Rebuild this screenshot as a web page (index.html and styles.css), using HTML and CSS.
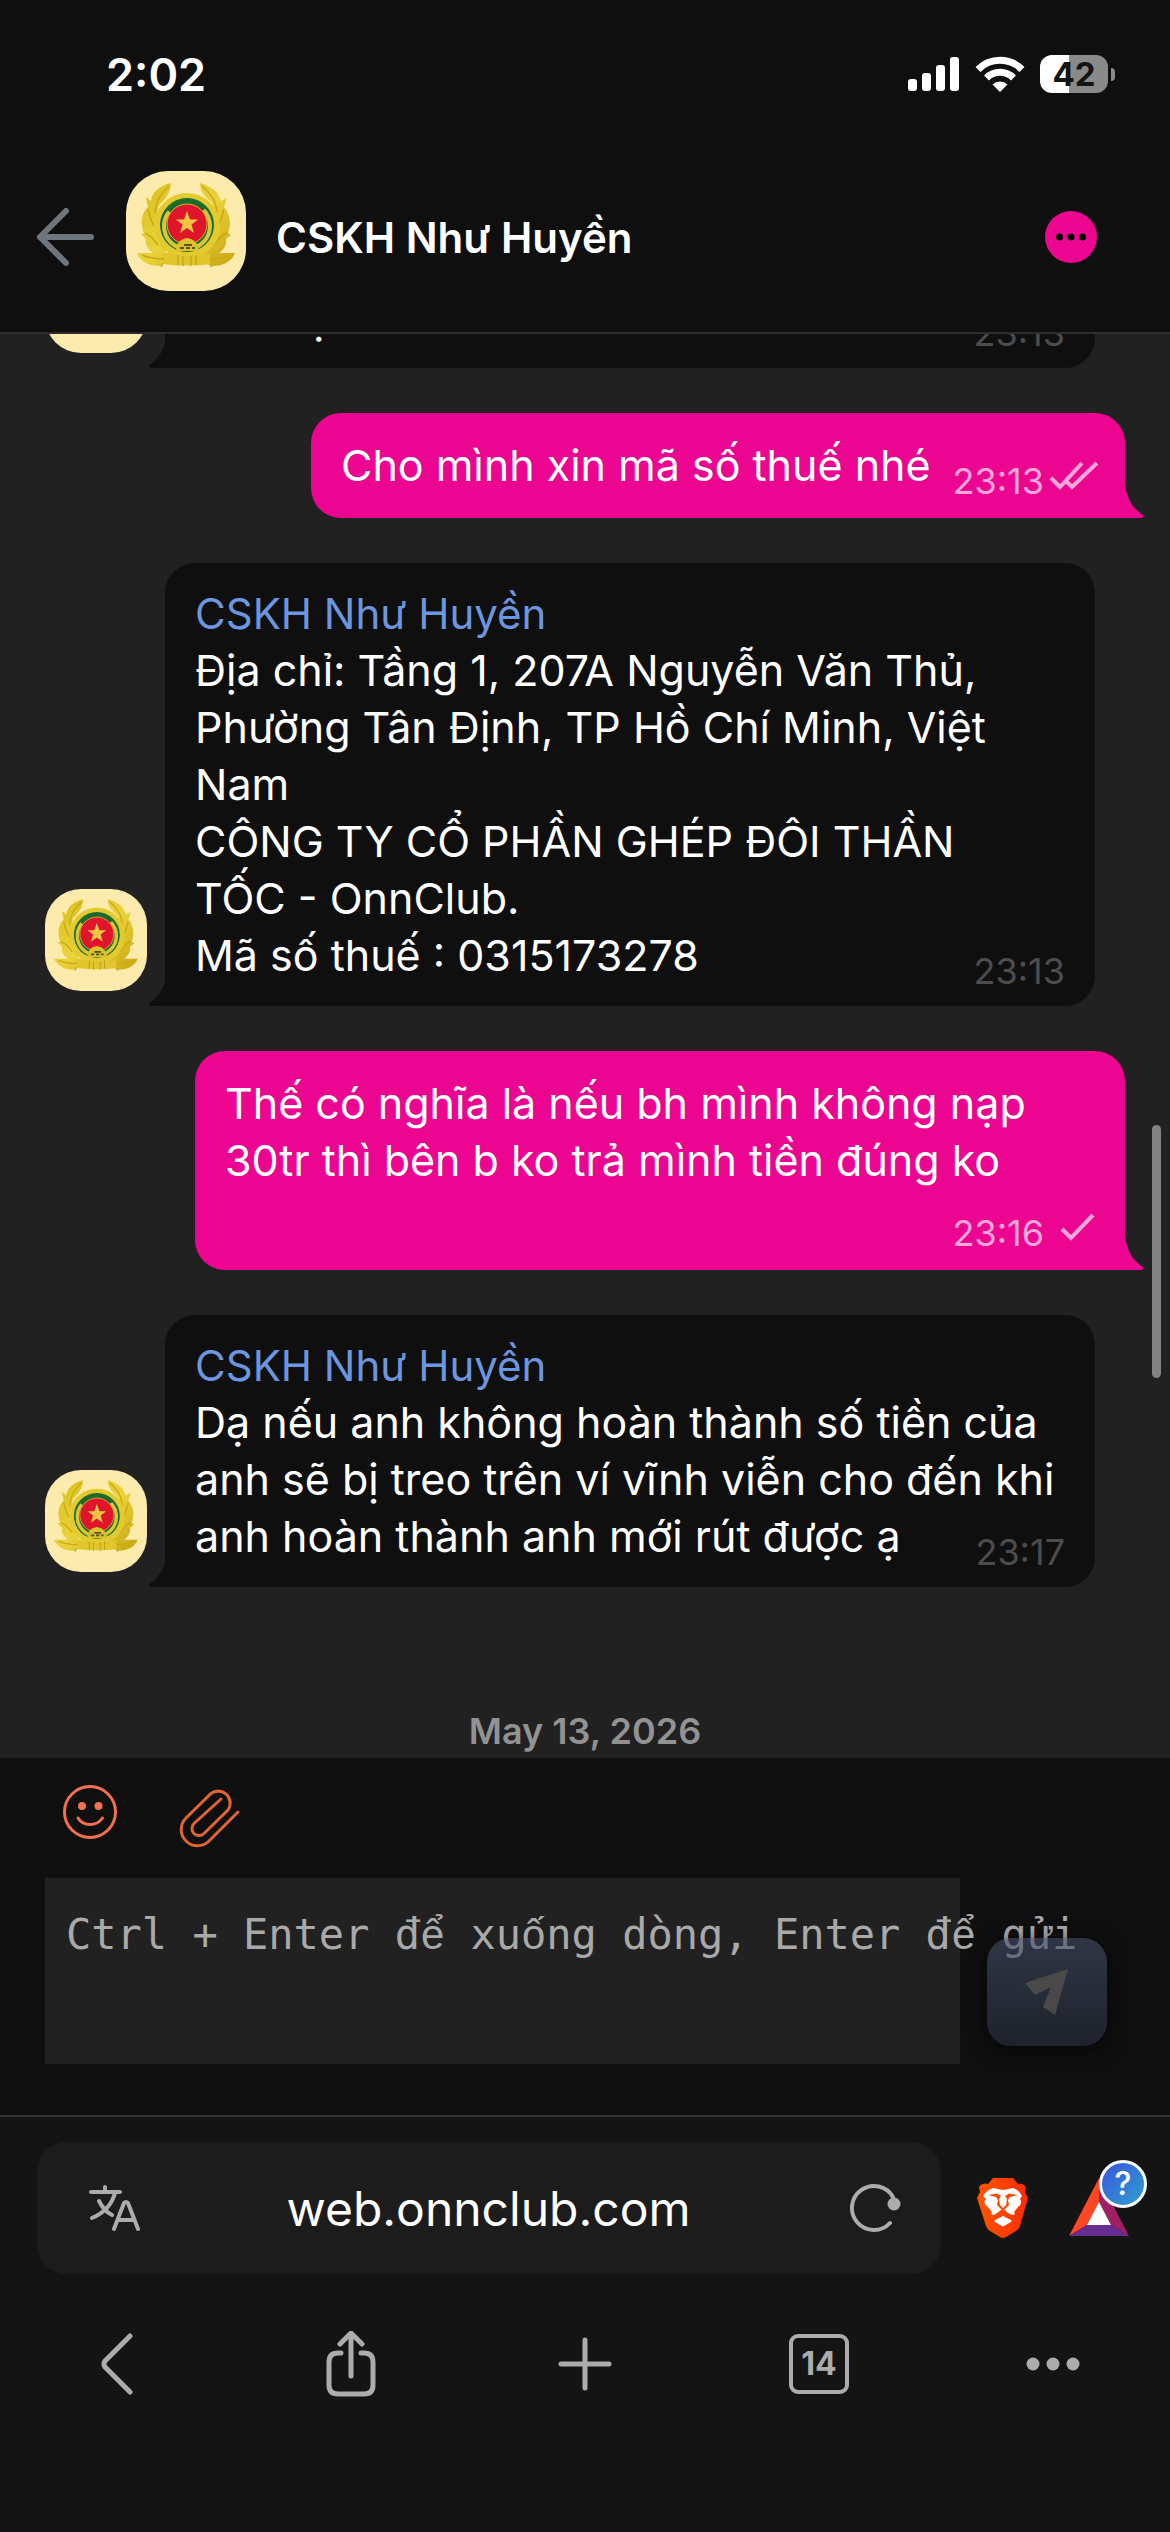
FILE: index.html
```html
<!DOCTYPE html>
<html lang="vi">
<head>
    <meta charset="UTF-8">
    <meta name="viewport" content="width=device-width, initial-scale=1.0">
    <title>CSKH Như Huyền</title>
    <link rel="stylesheet" href="styles.css">
</head>
<body>
    <svg class="defs" aria-hidden="true">
        <defs>
            <linearGradient id="gold" x1="0" y1="0" x2="1" y2="1">
                <stop offset="0" stop-color="#d9bf1c"/>
                <stop offset="0.5" stop-color="#e9d23a"/>
                <stop offset="1" stop-color="#c9a512"/>
            </linearGradient>
            <linearGradient id="braveGrad" x1="0" y1="0" x2="1" y2="0">
                <stop offset="0" stop-color="#ff5500"/>
                <stop offset="1" stop-color="#ff2d00"/>
            </linearGradient>
            <symbol id="emblem" viewBox="0 0 120 120">
                <rect width="120" height="120" fill="#fdebae"/>
                <path d="M45 12C32 15 26 22 25 30L20 26L22 36C14 44 15 54 18 62L15 63L20 68C19 74 22 78 27 82L11 82C14 90 22 95 34 95L40 92H80L86 95C98 95 106 90 109 82L93 82C98 78 101 74 100 68L105 64L102 62C105 54 105 44 98 36L101 27L95 30C93 22 87 16 74 12C74 22 80 26 86 32L92 55L80 82H40L28 55L33 34C40 28 44 22 45 12Z" fill="url(#gold)"/>
                <path d="M43 15C34 24 30 30 29 42M22 38C24 46 25 52 30 58M19 62C24 64 28 68 32 74M76 15C86 24 90 30 91 42M98 38C96 46 95 52 90 58M101 62C96 64 92 68 88 74M16 84C30 90 42 88 52 84M104 84C90 90 78 88 68 84M35 96L37 92M86 96L83 92" fill="none" stroke="#c9a915" stroke-width="1.5"/>
                <circle cx="61" cy="55" r="33" fill="#e3cb2f"/>
                <circle cx="61" cy="54" r="27" fill="#1c6a2c"/>
                <circle cx="61" cy="55" r="23" fill="none" stroke="#d8c63a" stroke-width="4" stroke-dasharray="106 38.500" stroke-dashoffset="-126"/>
                <circle cx="61" cy="53" r="20" fill="#e0152b" stroke="#d8b92a" stroke-width="1"/>
                <path d="M61 40L64 48.500L72 48.500L65.500 53.500L68 62L61 57L54 62L56.500 53.500L50 48.500L58 48.500Z" fill="#f0c544"/>
                <path d="M50 80C50 71 55 68 61 67C67 68 72 71 73 80Z" fill="#dcc22c"/>
                <path d="M54 77H58M60 77H64M66 77H69M58 74H66" stroke="#5a5210" stroke-width="2"/>
                <path d="M38 82C50 86 72 86 84 82V93C72 95 50 95 38 93Z" fill="#e0c62a"/>
                <path d="M52 84V94M57 85V95M65 85V95M70 84V94" stroke="#bb9a14" stroke-width="1"/>
            </symbol>
            <symbol id="tail" viewBox="0 0 20 36">
                <path d="M20 0C19 16 12 27 2 33Q1 36 4 36H20Z" fill="currentColor"/>
            </symbol>
        </defs>
    </svg>

    <div class="status-bar">
        <span class="clock">2:02</span>
        <div class="status-icons">
            <svg width="52" height="34" viewBox="0 0 52 34" fill="#fff">
                <rect x="0" y="22" width="9" height="12" rx="3"/>
                <rect x="14" y="16" width="9" height="18" rx="3"/>
                <rect x="28" y="8" width="9" height="26" rx="3"/>
                <rect x="42" y="0" width="9" height="34" rx="3"/>
            </svg>
            <svg width="50" height="36" viewBox="0 0 50 36" fill="none" stroke="#fff" stroke-width="7">
                <path d="M3 13.500A31 31 0 0 1 47 13.500"/>
                <path d="M11.500 22A19 19 0 0 1 38.500 22"/>
                <path d="M25 36L17.500 28.500A11 11 0 0 1 32.500 28.500Z" fill="#fff" stroke="none"/>
            </svg>
            <div class="battery"><span class="battery-level">42</span></div>
        </div>
    </div>

    <header class="header">
        <button class="icon-btn" aria-label="Back">
            <svg width="58" height="58" viewBox="0 0 58 58" fill="none" stroke="#6e757b" stroke-width="6" stroke-linecap="round" stroke-linejoin="round">
                <path d="M29 3L3 29L29 55M3 29H54"/>
            </svg>
        </button>
        <svg class="avatar avatar-lg"><use href="#emblem"/></svg>
        <h1 class="title">CSKH Như Huyền</h1>
        <button class="icon-btn more" aria-label="More">
            <svg width="52" height="52" viewBox="0 0 52 52">
                <circle cx="26" cy="26" r="26" fill="#eb0590"/>
                <circle cx="14.500" cy="26" r="3.500"/>
                <circle cx="26" cy="26" r="3.500"/>
                <circle cx="37.500" cy="26" r="3.500"/>
            </svg>
        </button>
    </header>

    <main class="chat">
        <div class="message in">
            <svg class="avatar"><use href="#emblem"/></svg>
            <div class="bubble">
                <svg class="tail"><use href="#tail"/></svg>
                chào ạ<span class="meta">23:13</span>
            </div>
        </div>

        <div class="message out">
            <div class="bubble">
                <svg class="tail"><use href="#tail"/></svg>
                Cho mình xin mã số thuế nhé<span class="meta">23:13<svg class="ticks" viewBox="0 0 52 30"><path d="M3 18L12 27L34 3M19 22L24 27L49 3"/></svg></span>
            </div>
        </div>

        <div class="message in">
            <svg class="avatar"><use href="#emblem"/></svg>
            <div class="bubble">
                <svg class="tail"><use href="#tail"/></svg>
                <div class="sender">CSKH Như Huyền</div>
                Địa chỉ: Tầng 1, 207A Nguyễn Văn Thủ, Phường Tân Định, TP Hồ Chí Minh, Việt Nam<br>
                CÔNG TY CỔ PHẦN GHÉP ĐÔI THẦN<br>
                TỐC - OnnClub.<br>
                Mã số thuế : 0315173278<span class="meta">23:13</span>
            </div>
        </div>

        <div class="message out">
            <div class="bubble">
                <svg class="tail"><use href="#tail"/></svg>
                Thế có nghĩa là nếu bh mình không nạp 30tr thì bên b ko trả mình tiền đúng ko<span class="meta">23:16<svg class="ticks" viewBox="0 0 52 30"><path d="M14 17L23 26L45 3"/></svg></span>
            </div>
        </div>

        <div class="message in">
            <svg class="avatar"><use href="#emblem"/></svg>
            <div class="bubble">
                <svg class="tail"><use href="#tail"/></svg>
                <div class="sender">CSKH Như Huyền</div>
                Dạ nếu anh không hoàn thành số tiền của anh sẽ bị treo trên ví vĩnh viễn cho đến khi anh hoàn thành anh mới rút được ạ<span class="meta">23:17</span>
            </div>
        </div>

        <div class="date">May 13, 2026</div>
    </main>
    <div class="scrollbar"></div>

    <form class="composer">
        <div class="tools">
            <button type="button" class="icon-btn" aria-label="Emoji">
                <svg width="54" height="54" viewBox="0 0 54 54" fill="none" stroke="#f4704f" stroke-width="3" stroke-linecap="round">
                    <circle cx="27" cy="27" r="25.500"/>
                    <circle cx="19" cy="21" r="4" fill="#f4704f" stroke="none"/>
                    <circle cx="35.500" cy="21" r="4" fill="#f4704f" stroke="none"/>
                    <path d="M15 33Q19 39.500 27 39.500T39.500 33"/>
                </svg>
            </button>
            <button type="button" class="icon-btn clip" aria-label="Attach">
                <svg width="62" height="62" viewBox="0 0 62 62" fill="none" stroke="#e0662f" stroke-width="3" stroke-linecap="round">
                    <path d="M59 25L30 54A16 16 0 0 1 7 31L32 6.500A12 12 0 0 1 49 23L25 46.500A7 7 0 0 1 15 36.500L42 12"/>
                </svg>
            </button>
        </div>
        <div class="input-row">
            <div class="input-box">
                <textarea class="input" id="message" placeholder=" "></textarea>
                <label class="hint" for="message">Ctrl + Enter đ<span class="thin">ể</span> xu<span class="thin">ố</span>ng dòng, Enter đ<span class="thin">ể</span> g<span class="thin">ử</span>i</label>
            </div>
            <button type="button" class="send" aria-label="Send">
                <svg width="44" height="46" viewBox="0 0 44 46" fill="#707070">
                    <path d="M43 0L30 46L18 38L26 18L10 26L0 14Z"/>
                </svg>
            </button>
        </div>
    </form>

    <footer class="browser">
        <div class="address-row">
            <div class="address">
                <button class="icon-btn" aria-label="Translate">
                    <svg width="52" height="48" viewBox="0 0 52 48" fill="none" stroke="#acacac" stroke-width="4" stroke-linecap="round" stroke-linejoin="round">
                        <path d="M3 8H32M17 3V8M27 9C24 20 16 29 4 34M11 17C14 23 18 28 24 31M26 45L36 19Q38 17 40 19L50 45M30 36H46"/>
                    </svg>
                </button>
                <a class="url" href="#">web.onnclub.com</a>
                <button class="icon-btn" aria-label="Reload">
                    <svg width="52" height="50" viewBox="0 0 52 50" fill="none" stroke="#acacac" stroke-width="4" stroke-linecap="round">
                        <path d="M41 40A22 22 0 1 1 44 14"/>
                        <circle cx="45" cy="21" r="6.500" fill="#acacac" stroke="none"/>
                    </svg>
                </button>
            </div>
            <button class="icon-btn" aria-label="Shields">
                <svg width="52" height="60" viewBox="0 0 52 60">
                    <path d="M16 0H36L41 6Q45 4 49 9L48 14L51 20L43 48Q42 51 39 53L29 59Q26 61 23 59L13 53Q10 51 9 48L0 20L3 14L2 9Q6 4 11 6Z" fill="url(#braveGrad)"/>
                    <path d="M16 10L26 12L36 10Q42 12 45 18L43 21Q46 25 41 29L37 34Q39 37 35 37L31 35L28 32Q26 31 24 32L20 35L17 37Q13 37 15 34L11 29Q5 25 9 21L6 18Q10 12 16 10ZM26 38L34 42Q35 43 34 44L27 48Q26 49 25 48L18 44Q17 43 18 42Z" fill="#fff"/>
                    <path d="M11 17L20 15.500L24 18L22 21L23 27L26 30L29 27L30 21L28 18L32 15.500L41 17L33 19L31 22L32 27L28 31L26 33L24 31L20 27L21 22L19 19ZM25 31H27V38H25Z" fill="#ff4a00"/>
                </svg>
            </button>
            <button class="icon-btn rewards" aria-label="Rewards">
                <svg width="60" height="60" viewBox="0 0 60 60">
                    <path d="M30 0L0 58L18 47L30 24Z" fill="#ff4724"/>
                    <path d="M30 0L60 58L42 47L30 24Z" fill="#9e1f63"/>
                    <path d="M0 58L18 47H42L60 58Z" fill="#662d91"/>
                    <path d="M30 24L18 47H42Z" fill="#fff"/>
                </svg>
                <span class="badge">?</span>
            </button>
        </div>
        <nav class="toolbar">
            <button class="icon-btn" aria-label="Back">
                <svg width="32" height="62" viewBox="0 0 32 62" fill="none" stroke="#acacac" stroke-width="5" stroke-linecap="round" stroke-linejoin="round">
                    <path d="M29 3L4 28Q2 31 4 34L29 59"/>
                </svg>
            </button>
            <button class="icon-btn" aria-label="Share">
                <svg width="50" height="66" viewBox="0 0 50 66" fill="none" stroke="#acacac" stroke-width="5" stroke-linecap="round" stroke-linejoin="round">
                    <path d="M15 22H12Q3 22 3 31V54Q3 63 12 63H38Q47 63 47 54V31Q47 22 38 22H35M25 45V3M14 13L25 2L36 13"/>
                </svg>
            </button>
            <button class="icon-btn" aria-label="New tab">
                <svg width="54" height="54" viewBox="0 0 54 54" stroke="#acacac" stroke-width="5" stroke-linecap="round">
                    <path d="M27 3V51M3 27H51"/>
                </svg>
            </button>
            <button class="tabs" aria-label="Tabs">14</button>
            <button class="icon-btn" aria-label="Menu">
                <svg width="54" height="14" viewBox="0 0 54 14" fill="#acacac">
                    <circle cx="7" cy="7" r="6.500"/>
                    <circle cx="27" cy="7" r="6.500"/>
                    <circle cx="47" cy="7" r="6.500"/>
                </svg>
            </button>
        </nav>
    </footer>
</body>
</html>
```

FILE: styles.css
```css
* {
    box-sizing: border-box;
}
body {
    font-family: Inter, "Noto Sans", sans-serif;
    margin: 0;
    height: 100vh;
    display: flex;
    flex-direction: column;
    position: relative;
    overflow: hidden;
    background-color: #0f0f0f;
    color: white;
    font-size: 43px;
    line-height: 57px;
}
svg {
    display: block;
    flex: none;
}
.defs {
    position: absolute;
    width: 0;
    height: 0;
}
button {
    font-family: inherit;
    border: none;
    padding: 0;
    cursor: pointer;
}
.icon-btn {
    background: none;
    display: flex;
    align-items: center;
    justify-content: center;
}

/* status bar */
.status-bar {
    display: flex;
    justify-content: space-between;
    align-items: center;
    height: 148px;
    padding: 0 54px 0 106px;
}
.clock {
    font-size: 45px;
    font-weight: 600;
}
.status-icons {
    display: flex;
    align-items: center;
    gap: 15px;
}
.battery {
    position: relative;
    width: 68px;
    height: 38px;
    margin-right: 8px;
    border-radius: 12px;
    background: linear-gradient(to right, white 43%, #8a8a8a 43%);
    text-align: center;
}
.battery::after {
    content: "";
    position: absolute;
    right: -7px;
    top: 13px;
    width: 4px;
    height: 13px;
    border-radius: 0 6px 6px 0;
    background-color: #8a8a8a;
}
.battery-level {
    display: block;
    color: #141414;
    font-size: 33px;
    font-weight: 700;
    line-height: 38px;
}

/* header */
.header {
    display: flex;
    align-items: center;
    height: 184px;
    padding: 0 73px 18px 37px;
}
.header .icon-btn {
    padding-top: 12px;
}
.avatar {
    width: 102px;
    height: 102px;
    border-radius: 36px;
    margin-bottom: 15px;
}
.avatar-lg {
    width: 120px;
    height: 120px;
    border-radius: 42px;
    margin: 0 30px 0 31px;
}
.title {
    flex: 1;
    margin: 0;
    padding-top: 12px;
    font-size: 42px;
    font-weight: 600;
}

/* chat */
.chat {
    flex: 1;
    min-height: 0;
    overflow: hidden;
    display: flex;
    flex-direction: column;
    justify-content: flex-end;
    gap: 45px;
    padding: 0 45px 6px;
    background-color: #212121;
    border-top: 2px solid #2c2c2c;
}
.message {
    display: flex;
    flex: none;
    align-items: flex-end;
    gap: 18px;
    padding-right: 30px;
}
.message.out {
    justify-content: flex-end;
    padding-right: 0;
}
.bubble {
    display: flow-root;
    position: relative;
    max-width: 930px;
    padding: 22px 30px;
    border-radius: 30px 30px 30px 0;
    background-color: #0f0f0f;
}
.message.in .bubble {
    flex: 1;
}
.message.out .bubble {
    padding: 24px 25px 24px 30px;
    border-radius: 30px 30px 0 30px;
    background-color: #eb0590;
}
.tail {
    position: absolute;
    left: -18px;
    bottom: 0;
    width: 20px;
    height: 36px;
    color: #0f0f0f;
}
.message.out .tail {
    left: auto;
    right: -20px;
    color: #eb0590;
    transform: scaleX(-1);
}
.sender {
    color: #6c96df;
    font-size: 42px;
}
.meta {
    float: right;
    display: flex;
    gap: 4px;
    height: 34px;
    margin-top: 23px;
    margin-left: 22px;
    color: #4c4c4f;
    font-size: 36px;
    line-height: 42px;
}
.message.out .meta {
    color: #f9a6d8;
}
.ticks {
    width: 52px;
    height: 30px;
    fill: none;
    stroke: currentColor;
    stroke-width: 4;
}
.date {
    flex: none;
    margin-top: 78px;
    color: #929292;
    font-size: 36px;
    font-weight: 600;
    line-height: 42px;
    text-align: center;
}
.scrollbar {
    position: absolute;
    right: 9px;
    top: 1125px;
    width: 9px;
    height: 253px;
    border-radius: 5px;
    background-color: #828282;
}

/* composer */
.composer {
    padding: 27px 45px 51px;
    border-bottom: 2px solid #333;
}
.tools {
    display: flex;
    gap: 62px;
    padding-left: 18px;
    height: 93px;
}
.tools .icon-btn {
    align-self: flex-start;
}
.tools .clip {
    margin-top: 2px;
}
.input-row {
    display: flex;
    align-items: flex-end;
    gap: 27px;
    padding-right: 18px;
}
.input-box {
    position: relative;
    flex: 1;
    height: 186px;
}
.input,
.hint {
    font-family: "DejaVu Sans Mono", "Liberation Mono", monospace;
    font-size: 42px;
    line-height: 60px;
}
.input {
    display: block;
    width: 100%;
    height: 100%;
    padding: 27px 21px;
    border: none;
    outline: none;
    resize: none;
    background-color: #212121;
    color: white;
}
/* placeholder text, runs past the box on narrow screens */
.hint {
    position: absolute;
    left: 21px;
    top: 27px;
    color: #a9a9a9;
    white-space: nowrap;
    pointer-events: none;
}
.input:not(:placeholder-shown) + .hint {
    display: none;
}
.thin {
    font-family: "Liberation Mono", monospace;
}
.send {
    position: relative;
    display: flex;
    align-items: center;
    justify-content: center;
    width: 120px;
    height: 108px;
    margin-bottom: 18px;
    border-radius: 24px;
    background: linear-gradient(#46506b, #282f3f);
    box-shadow: 0 4px 20px black;
    opacity: 0.6;
}

/* browser controls */
.browser {
    padding: 25px 41px 89px 37px;
    background-color: #141414;
}
.address-row {
    display: flex;
    align-items: center;
    gap: 36px;
}
.address {
    flex: 1;
    display: flex;
    align-items: center;
    height: 132px;
    padding: 0 40px 0 51px;
    border-radius: 30px;
    background-color: #1c1c1c;
}
.url {
    flex: 1;
    padding-right: 12px;
    color: white;
    font-size: 48px;
    text-align: center;
    text-decoration: none;
}
.rewards {
    position: relative;
    margin-left: 4px;
}
.badge {
    position: absolute;
    right: -18px;
    top: -18px;
    width: 48px;
    height: 48px;
    border: 3px solid white;
    border-radius: 50%;
    background: linear-gradient(135deg, #3a55dd, #2f9fd0);
    color: white;
    font-size: 32px;
    font-weight: 500;
    line-height: 42px;
    text-align: center;
}
.toolbar {
    display: grid;
    grid-template-columns: repeat(5, 1fr);
    align-items: center;
    justify-items: center;
    height: 159px;
    margin: 10px -41px 0 -37px;
}
.tabs {
    width: 60px;
    height: 60px;
    border: 4px solid #acacac;
    border-radius: 9px;
    background: none;
    color: #acacac;
    font-size: 32px;
    font-weight: 700;
}
```
